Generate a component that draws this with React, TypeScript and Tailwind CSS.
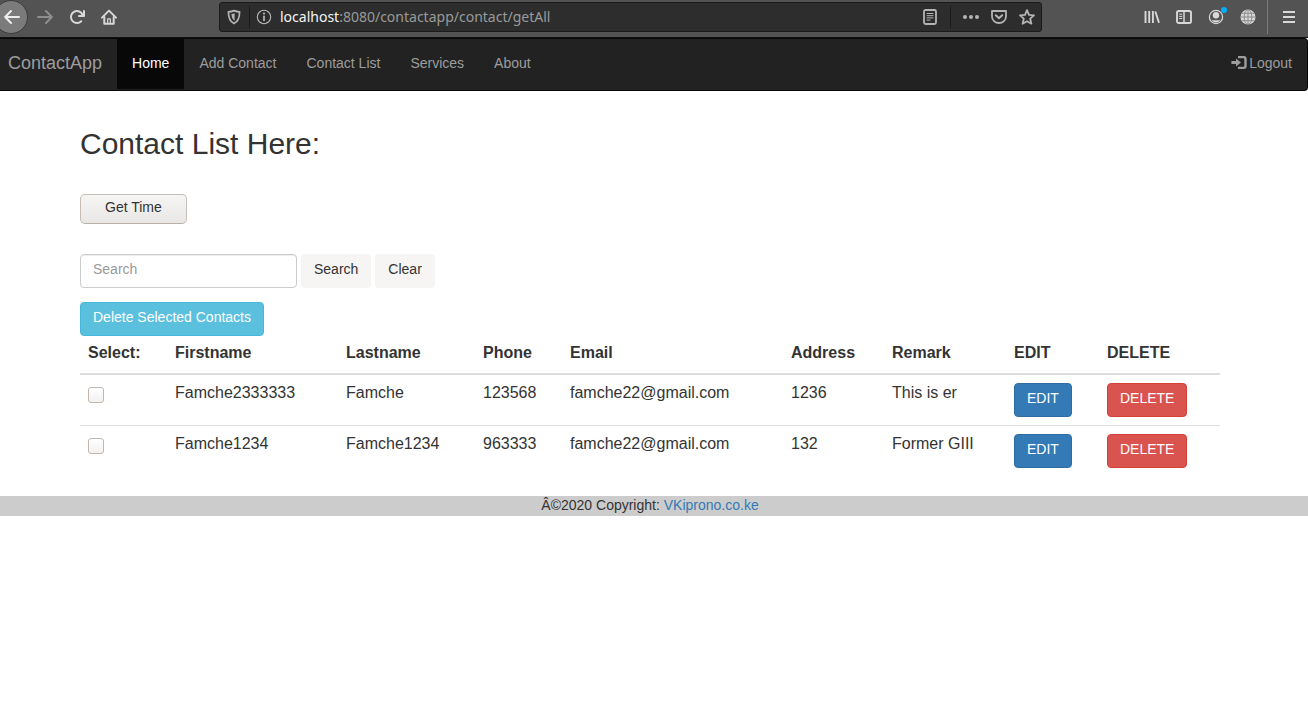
import React, { useState } from "react";

type Contact = {
  first: string;
  last: string;
  phone: string;
  email: string;
  address: string;
  remark: string;
};

const contacts: Contact[] = [
  { first: "Famche2333333", last: "Famche", phone: "123568", email: "famche22@gmail.com", address: "1236", remark: "This is er" },
  { first: "Famche1234", last: "Famche1234", phone: "963333", email: "famche22@gmail.com", address: "132", remark: "Former GIII" },
];

function Glyph({ className = "", children }: { className?: string; children: React.ReactNode }) {
  return (
    <svg
      viewBox="0 0 16 16"
      aria-hidden="true"
      className={`size-4 shrink-0 ${className}`}
      fill="none"
      stroke="currentColor"
      strokeWidth="2"
      strokeLinecap="round"
      strokeLinejoin="round"
    >
      {children}
    </svg>
  );
}

function ToolButton({ label, className = "", children }: { label: string; className?: string; children: React.ReactNode }) {
  return (
    <button type="button" aria-label={label} className={`flex h-8 w-8 shrink-0 items-center justify-center ${className}`}>
      {children}
    </button>
  );
}

function BrowserBar() {
  return (
    <header className="flex h-[38px] border-b border-[#101010] bg-[#535353] pb-[3px] text-[#d8d8d8]">
      <div className="flex items-center">
        <button
          type="button"
          aria-label="Back"
          className="-ml-[6px] flex size-[34px] items-center justify-center rounded-full border border-[#3c3c3c] bg-[#7b7b7b] pl-[2px] text-[#ededed]"
        >
          <Glyph>
            <path d="M15 8H1.600M7 2 1.200 8 7 14" />
          </Glyph>
        </button>
        <ToolButton label="Forward" className="text-[#8e8e8e]">
          <Glyph className="ml-[2px]">
            <path d="M1 8h13.400M9 2l5.800 6L9 14" />
          </Glyph>
        </ToolButton>
        <ToolButton label="Reload">
          <Glyph className="ml-[2px]">
            <path
              d="M15 1a1 1 0 0 0-1 1v2.418A6.995 6.995 0 1 0 8 15a6.954 6.954 0 0 0 4.950-2.050 1 1 0 0 0-1.414-1.414A5.019 5.019 0 1 1 12.549 6H10a1 1 0 0 0 0 2h5a1 1 0 0 0 1-1V2a1 1 0 0 0-1-1z"
              fill="currentColor"
              stroke="none"
            />
          </Glyph>
        </ToolButton>
        <ToolButton label="Home">
          <Glyph className="ml-[2px]">
            <path d="M1 8.600 8 1.600l7 7" />
            <path d="M3.300 8v6.700h9.400V8" />
            <path d="M6.700 14.500V9.800h2.600v4.700z" strokeWidth="1.200" />
          </Glyph>
        </ToolButton>
      </div>

      <div className="flex min-w-0 flex-1 items-center pr-[94px] pl-[95px]">
        <div className="flex h-[30px] min-w-0 flex-1 items-center rounded-[3px] border border-[#1b1b1b] bg-[#2d2d2d] text-[#b4b4b4]">
          <span className="flex h-[22px] items-center border-r border-[#1b1b1b] pr-[7px] pl-[6px]">
            <Glyph>
              <path d="M8 1.600c2 .9 4 1.200 5.600 1.200 0 5.600-1 9.600-5.600 11.800C3.400 12.400 2.400 8.400 2.400 2.800 4 2.800 6 2.500 8 1.600z" strokeWidth="1.700" />
              <path d="M8.600 4.300v7.400c-2.200-1.300-3-3.600-3.200-6.600 1.100-.1 2.200-.4 3.200-.8z" fill="currentColor" stroke="none" />
            </Glyph>
          </span>
          <Glyph className="ml-[6px]">
            <circle cx="8" cy="8" r="6.700" strokeWidth="1.100" />
            <path d="M8 7.300v4" strokeWidth="1.800" />
            <circle cx="8" cy="4.600" r="1.100" fill="currentColor" stroke="none" />
          </Glyph>
          <div className="ml-[8px] min-w-0 flex-1 truncate font-['Noto_Sans',sans-serif] text-[14px] leading-5 text-[#9a9a9a]">
            <span className="text-[#f4f4f4]">localhost</span>:8080/contactapp/contact/getAll
          </div>
          <Glyph>
            <rect x="2" y="1" width="12" height="14" rx="1.500" strokeWidth="1.800" />
            <path d="M5 4.500h6M5 6.700h6M5 8.900h6M5 11.100h3" strokeWidth="1" />
          </Glyph>
          <span className="mx-[12px] h-[22px] w-px bg-[#1b1b1b]" />
          <Glyph>
            <g fill="currentColor" stroke="none">
              <circle cx="2" cy="8" r="2" />
              <circle cx="8" cy="8" r="2" />
              <circle cx="14" cy="8" r="2" />
            </g>
          </Glyph>
          <Glyph className="ml-[12px]">
            <path d="M1 2h14v5.400a7 6.600 0 0 1-14 0z" strokeWidth="1.800" />
            <path d="M4.800 6.200 8 9.300l3.200-3.100" />
          </Glyph>
          <Glyph className="mr-[6px] ml-[12px]">
            <path d="m8 1.200 2 4.600 5 .5-3.800 3.400 1.200 5L8 12.200l-4.400 2.500 1.200-5L1 6.300l5-.5z" strokeWidth="1.800" />
          </Glyph>
        </div>
      </div>

      <div className="flex items-center">
        <ToolButton label="Library">
          <Glyph>
            <path d="M1.500 2v12M5.200 2v12M8.900 2v12M11.300 2.500l3.700 11.300" strokeWidth="1.900" strokeLinecap="butt" />
          </Glyph>
        </ToolButton>
        <ToolButton label="Sidebars">
          <Glyph>
            <rect x="1" y="2" width="14" height="12" rx="1.800" strokeWidth="1.900" />
            <path d="M8 2.500v11" strokeWidth="1.500" />
            <path d="M3.200 5.200h3M3.200 7.400h3M3.200 9.500h3" strokeWidth="1" strokeLinecap="butt" />
          </Glyph>
        </ToolButton>
        <ToolButton label="Account" className="relative">
          <Glyph>
            <circle cx="8" cy="8" r="6.600" strokeWidth="1.200" />
            <circle cx="8" cy="6.200" r="3.200" fill="currentColor" stroke="none" />
            <path d="M3.600 10.500c1 .9 2.300.8 4.400.8s3.400.1 4.400-.8c-.8 1.900-2.500 3-4.400 3s-3.600-1.100-4.400-3z" fill="currentColor" stroke="none" />
          </Glyph>
          <span className="absolute top-[6px] right-[5px] size-[6px] rounded-full bg-[#00aefc]" />
        </ToolButton>
        <ToolButton label="Language">
          <Glyph>
            <circle cx="8" cy="8" r="7.500" fill="currentColor" stroke="none" />
            <g stroke="#7c7c7c" strokeWidth=".8" strokeLinecap="butt">
              <path d="M8 .5v15M.5 8h15M1.800 4.300h12.400M1.800 11.700h12.400" />
              <ellipse cx="8" cy="8" rx="3.800" ry="7.500" />
            </g>
          </Glyph>
        </ToolButton>
        <span className="ml-[3px] h-[34px] w-px self-start bg-[#7a7a7a]" />
        <ToolButton label="Menu" className="mr-[3px] ml-[5px]">
          <Glyph>
            <path d="M2 3h12M2 8h12M2 13h12" strokeLinecap="butt" />
          </Glyph>
        </ToolButton>
      </div>
    </header>
  );
}

const links = ["Home", "Add Contact", "Contact List", "Services", "About"];

function SiteNav() {
  return (
    <nav className="flex h-[53px] justify-between rounded-r-[4px] border-y border-r border-[#080808] bg-[#222] pb-px pl-[8px] text-[14px] leading-5 text-[#9d9d9d]">
      <div className="flex">
        <a href="#" className="pt-[14px] pr-[15px] pb-4 text-[18px]">
          ContactApp
        </a>
        {links.map((name) => (
          <a key={name} href="#" className={`px-[15px] pt-[14px] pb-4 ${name === "Home" ? "bg-[#080808] text-white" : ""}`}>
            {name}
          </a>
        ))}
      </div>
      <a href="#" className="flex gap-[2px] px-[15px] pt-[14px] pb-4">
        <svg viewBox="0 0 16 14" aria-hidden="true" className="mt-[3px] h-[14px] w-4" fill="currentColor">
          <path d="M7 0h5.800A2.900 2.900 0 0 1 15.700 2.900v7.200a2.900 2.900 0 0 1-2.900 2.900H7v-2.300h5.400a.9.900 0 0 0 .9-.9V3.200a.9.900 0 0 0-.9-.9H7z" />
          <path d="M5 2.500 10 6.500l-5 4V8H.4V5H5z" />
        </svg>
        Logout
      </a>
    </nav>
  );
}

const button = "rounded-[4px] border px-3 pt-1 pb-2 text-[14px] leading-5";
const heading = "px-2 pt-[5px] pb-[9px] text-left font-bold";
const cell = "px-2 pt-[6px] pb-2";

export default function App() {
  const [query, setQuery] = useState("");
  return (
    <div className="min-h-screen bg-white font-['Liberation_Sans',Arial,sans-serif] text-[#333]">
      <BrowserBar />
      <SiteNav />

      <main className="pr-2">
        <div className="mx-auto max-w-[1170px] px-[15px] pt-9">
          <h2 className="text-[30px] leading-[33px]">Contact List Here:</h2>

          <button
            type="button"
            className="mt-[34px] block h-[30px] rounded-[5px] border border-[#c6beb7] border-b-[#b9b0a8] bg-linear-to-b from-[#f6f5f4] to-[#e9e7e5] px-6 pb-[4px] text-[14px] leading-5"
          >
            Get Time
          </button>

          <form className="mt-[30px] flex gap-1" onSubmit={(e) => e.preventDefault()}>
            <input
              type="text"
              aria-label="Search contacts"
              placeholder="Search"
              value={query}
              onChange={(e) => setQuery(e.target.value)}
              className={`${button} w-[217px] border-[#ccc] shadow-[inset_0_1px_1px_rgba(0,0,0,0.075)] placeholder:text-[#999]`}
            />
            <button type="submit" className={`${button} border-transparent bg-[#f6f5f4]`}>
              Search
            </button>
            <button type="button" onClick={() => setQuery("")} className={`${button} border-transparent bg-[#f6f5f4]`}>
              Clear
            </button>
          </form>

          <button type="button" className={`${button} mt-[14px] block border-[#46b8da] bg-[#5bc0de] text-white`}>
            Delete Selected Contacts
          </button>

          <table className="mb-5 w-full table-fixed border-collapse text-[16px] leading-[23px]">
            <thead>
              <tr className="border-b-2 border-[#ddd]">
                <th className={`${heading} w-[87px]`}>Select:</th>
                <th className={`${heading} w-[171px]`}>Firstname</th>
                <th className={`${heading} w-[137px]`}>Lastname</th>
                <th className={`${heading} w-[87px]`}>Phone</th>
                <th className={`${heading} w-[221px]`}>Email</th>
                <th className={`${heading} w-[101px]`}>Address</th>
                <th className={`${heading} w-[122px]`}>Remark</th>
                <th className={`${heading} w-[93px]`}>EDIT</th>
                <th className={`${heading} w-[121px]`}>DELETE</th>
              </tr>
            </thead>
            <tbody>
              {contacts.map((c) => (
                <tr key={c.first} className="border-t border-[#ddd] align-top first:border-t-0">
                  <td className="px-2 pt-3 pb-2">
                    <input
                      type="checkbox"
                      aria-label={`Select ${c.first}`}
                      className="block size-4 appearance-none rounded-[3px] border border-[#bfb6ae] bg-linear-to-b from-white to-[#f3f1f0] checked:bg-[#337ab7]"
                    />
                  </td>
                  <td className={cell}>{c.first}</td>
                  <td className={cell}>{c.last}</td>
                  <td className={cell}>{c.phone}</td>
                  <td className={cell}>{c.email}</td>
                  <td className={cell}>{c.address}</td>
                  <td className={cell}>{c.remark}</td>
                  <td className="px-2 py-2">
                    <button type="button" className={`${button} block border-[#2e6da4] bg-[#337ab7] text-white`}>
                      EDIT
                    </button>
                  </td>
                  <td className="px-2 py-2">
                    <button type="button" className={`${button} block border-[#d43f3a] bg-[#d9534f] text-white`}>
                      DELETE
                    </button>
                  </td>
                </tr>
              ))}
            </tbody>
          </table>
        </div>
      </main>

      <footer className="bg-[#ccc] pr-2 pb-[2px] text-center text-[14px] leading-[18px]">
        Â©2020 Copyright:{" "}
        <a href="#" className="text-[#337ab7]">
          VKiprono.co.ke
        </a>
      </footer>
    </div>
  );
}
